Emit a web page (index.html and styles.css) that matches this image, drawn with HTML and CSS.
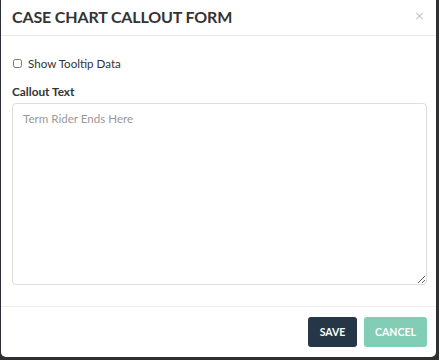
FILE: index.html
```html
<!DOCTYPE html>
<html>
<head>
<meta charset="utf-8">
<link rel="stylesheet" href="styles.css">
</head>
<body>
<div class="modal">
  <div class="modal-header">
    <h1 class="modal-title">CASE CHART CALLOUT FORM</h1>
    <span class="close">×</span>
  </div>
  <div class="modal-body">
    <label class="check-row"><input type="checkbox" class="check"> <span>Show Tooltip Data</span></label>
    <div class="field-label">Callout Text</div>
    <textarea class="callout" placeholder="Term Rider Ends Here"></textarea>
  </div>
  <div class="modal-footer">
    <button class="btn btn-save">SAVE</button>
    <button class="btn btn-cancel">CANCEL</button>
  </div>
</div>
</body>
</html>
```
FILE: styles.css
```css
html, body {
  margin: 0;
  padding: 0;
}
body {
  background: #2c3034;
  font-family: Lato, "Open Sans", sans-serif;
  width: 439px;
  height: 360px;
  overflow: hidden;
}
.modal {
  margin-left: 1px;
  width: 435px;
  height: 357px;
  background: #fff;
  border-radius: 0 0 5px 5px;
  display: flex;
  flex-direction: column;
}
.modal-header {
  height: 36px;
  box-sizing: border-box;
  border-bottom: 1px solid #e9e9e9;
  display: flex;
  align-items: center;
  justify-content: space-between;
  padding: 0 11px 2px 11px;
}
.modal-title {
  margin: 0;
  font-size: 16px;
  font-weight: 700;
  color: #333;
  letter-spacing: -0.15px;
}
.close {
  color: #c8c8c8;
  font-size: 13px;
  font-family: "DejaVu Sans", sans-serif;
  margin-top: -2px;
}
.modal-body {
  padding: 20px 9px 21px 11px;
  display: flex;
  flex-direction: column;
  border-bottom: 1px solid #eeeeee;
}
.check-row {
  display: flex;
  align-items: center;
  font-size: 11.6px;
  color: #333;
  height: 14px;
}
.check {
  width: 9px;
  height: 9px;
  margin: 0 6px 0 1px;
}
.field-label {
  margin-top: 14px;
  font-size: 11.8px;
  font-weight: 700;
  color: #333;
}
.callout {
  margin-top: 4px;
  height: 182px;
  box-sizing: border-box;
  border: 1px solid #dedede;
  border-radius: 4px;
  padding: 8px 10px;
  font-family: Lato, "Open Sans", sans-serif;
  font-size: 11.6px;
  resize: vertical;
}
.callout::placeholder {
  color: #999;
}
.modal-footer {
  flex: 1;
  display: flex;
  justify-content: flex-end;
  align-items: flex-start;
  gap: 7px;
  padding: 10px 9px 0 0;
}
.btn {
  height: 30px;
  border: none;
  border-radius: 3px;
  color: #fff;
  font-family: Lato, "Open Sans", sans-serif;
  font-weight: 700;
  font-size: 10.5px;
  padding: 0 11px;
}
.btn-save {
  background: #253746;
  width: 49px;
}
.btn-cancel {
  background: #82cdb5;
  width: 63px;
}
```
